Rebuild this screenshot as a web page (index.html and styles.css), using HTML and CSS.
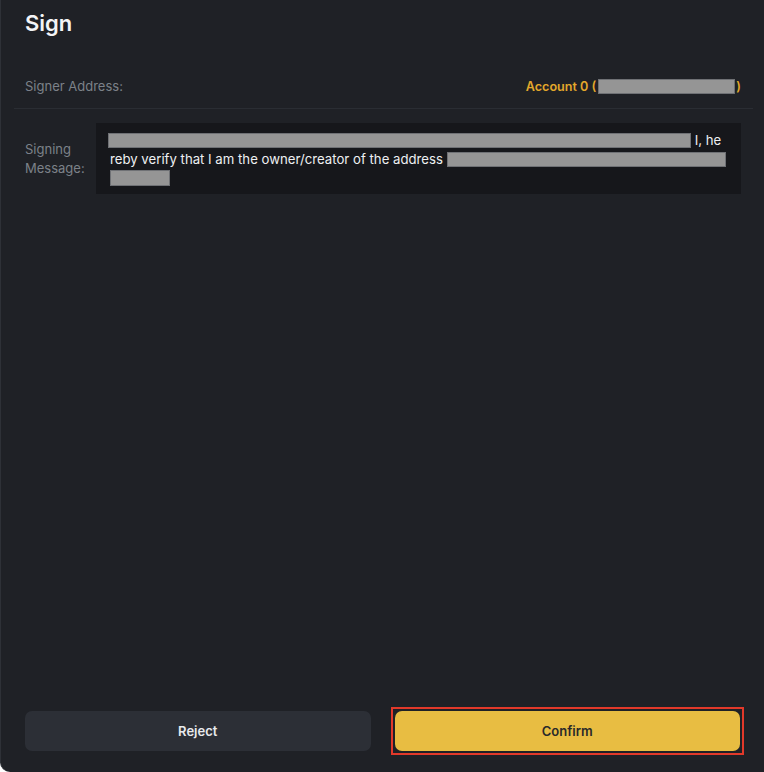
FILE: index.html
```html
<!DOCTYPE html>
<html lang="en">
<head>
<meta charset="utf-8">
<title>Sign</title>
<link rel="stylesheet" href="styles.css">
</head>
<body>
<div class="panel">
  <h1 class="title">Sign</h1>
  <div class="signer-row">
    <span class="label">Signer Address:</span>
    <span class="account">Account 0 (<span class="redact redact-addr"></span>)</span>
  </div>
  <div class="divider"></div>
  <div class="message-row">
    <div class="label msg-label">Signing<br>Message:</div>
    <div class="message-box">
      <span class="redact redact-l1"></span> I, he<br>reby verify that I am the owner/creator of the address <span class="redact redact-l2"></span><br><span class="redact redact-l3"></span>
    </div>
  </div>
  <div class="spacer"></div>
  <div class="actions">
    <button class="btn btn-reject">Reject</button>
    <button class="btn btn-confirm">Confirm</button>
  </div>
</div>
</body>
</html>
```
FILE: styles.css
```css
html, body {
  margin: 0;
  padding: 0;
  background: #ffffff;
}
body {
  font-family: Inter, "Noto Sans", "Liberation Sans", sans-serif;
}
.panel {
  height: 772px;
  box-sizing: border-box;
  background: #1f2126;
  border-left: 1px solid #2e3137;
  border-bottom-left-radius: 10px;
  display: flex;
  flex-direction: column;
}
.title {
  margin: 0;
  padding: 9px 24px 0;
  font-size: 22px;
  line-height: 28px;
  font-weight: 600;
  color: #f3f4f6;
}
.signer-row {
  display: flex;
  justify-content: space-between;
  align-items: center;
  padding: 0 23px 0 24px;
  margin-top: 39px;
  height: 20px;
}
.label {
  font-size: 13px;
  color: #7c8189;
  line-height: 19px;
}
.account {
  font-size: 12.6px;
  font-weight: 600;
  color: #e3a82b;
  display: flex;
  align-items: center;
}
.redact {
  display: inline-block;
  background: #959595;
  border: 1px solid #6f7175;
  box-sizing: border-box;
  height: 15px;
  vertical-align: -3px;
}
.redact-addr {
  width: 137px;
  margin: 0 1px 0 2px;
}
.divider {
  height: 1px;
  background: #2a2d33;
  margin: 12px 11px 0 13px;
}
.message-row {
  display: flex;
  align-items: flex-start;
  padding: 0 23px 0 24px;
  margin-top: 14px;
}
.msg-label {
  width: 71px;
  flex: none;
  padding-top: 17px;
}
.message-box {
  flex: 1;
  background: #16171b;
  padding: 8px 10px 6px 14px;
  font-size: 13.2px;
  line-height: 19px;
  color: #eef0f2;
  min-height: 69px;
  box-sizing: border-box;
}
.redact-l1 {
  width: 583px;
  margin-left: -2px;
}
.redact-l2 {
  width: 279px;
}
.redact-l3 {
  width: 60px;
  height: 16px;
}
.spacer {
  flex: 1;
}
.actions {
  display: grid;
  grid-template-columns: 1fr 1fr;
  gap: 24px;
  padding: 0 24px 21px 24px;
}
.btn {
  height: 40px;
  border: none;
  border-radius: 7px;
  font-family: inherit;
  font-size: 13px;
  font-weight: 600;
  cursor: pointer;
}
.btn-reject {
  background: #2c2f36;
  color: #e8eaed;
}
.btn-confirm {
  position: relative;
  background: #e8bd42;
  color: #2a2a2a;
}
.btn-confirm::after {
  content: "";
  position: absolute;
  inset: -4px;
  border: 2px solid #e2392a;
  pointer-events: none;
}
```
